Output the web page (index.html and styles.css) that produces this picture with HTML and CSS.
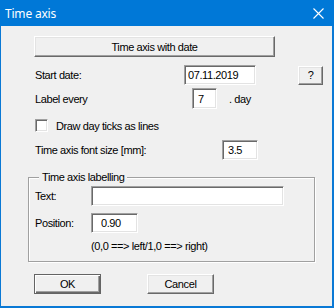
FILE: index.html
```html
<!DOCTYPE html>
<html lang="en">
<head>
    <meta charset="UTF-8">
    <title>Time axis</title>
    <link rel="stylesheet" href="styles.css">
</head>
<body>
    <div class="window">
        <div class="titlebar">
            <span class="title">Time axis</span>
            <svg class="close" width="11" height="11" viewBox="0 0 11 11">
                <path d="M0.5 0.5 L10.5 10.5 M10.5 0.5 L0.5 10.5" stroke="#fff" stroke-width="1.1" fill="none"/>
            </svg>
        </div>

        <div class="client">
            <button class="btn btn-wide">Time axis with date</button>

            <div class="row row-start">
                <span class="label label-start">Start date:</span>
                <input class="field field-date" value="07.11.2019">
                <button class="btn btn-help">?</button>
            </div>

            <div class="row row-every">
                <span class="label label-every">Label every</span>
                <input class="field field-every" value="7">
                <span class="unit">. day</span>
            </div>

            <div class="row row-check">
                <span class="checkbox"></span>
                <span class="label">Draw day ticks as lines</span>
            </div>

            <div class="row row-size">
                <span class="label label-size">Time axis font size [mm]:</span>
                <input class="field field-size" value="3.5">
            </div>

            <div class="group">
                <div class="legend">Time axis labelling</div>
                <div class="row row-text">
                    <span class="label label-group">Text:</span>
                    <input class="field field-text" value="">
                </div>
                <div class="row row-pos">
                    <span class="label label-group">Position:</span>
                    <input class="field field-pos" value="0.90">
                </div>
                <div class="hint">(0,0 ==&gt; left/1,0 ==&gt; right)</div>
            </div>

            <div class="row row-buttons">
                <button class="btn btn-dialog btn-default">OK</button>
                <button class="btn btn-dialog">Cancel</button>
            </div>
        </div>
    </div>
</body>
</html>
```

FILE: styles.css
```css
body {
    margin: 0;
    font-family: "Liberation Sans", Arial, sans-serif;
    font-size: 11px;
    letter-spacing: -0.4px;
    color: #000;
}

.window {
    width: 334px;
    height: 308px;
    box-sizing: border-box;
    background-color: #0a79d5;
    display: flex;
    flex-direction: column;
}

.titlebar {
    height: 26px;
    flex-shrink: 0;
    display: flex;
    align-items: center;
    padding: 0 10px 0 5px;
    background-color: #0078d7;
    color: #fff;
    font-family: "Noto Sans", "Open Sans", sans-serif;
    font-size: 12px;
    letter-spacing: -0.2px;
}

.close {
    margin-left: auto;
}

.client {
    flex: 1;
    margin: 0 2px 2px 1px;
    background-color: #f0f0f0;
    padding-top: 10px;
}

/* classic raised button */
.btn {
    display: block;
    box-sizing: border-box;
    padding: 0;
    font-family: "Liberation Sans", Arial, sans-serif;
    font-size: 11px;
    letter-spacing: -0.4px;
    color: #000;
    background-color: #f0f0f0;
    border: 1px solid;
    border-color: #fff #696969 #696969 #fff;
    box-shadow: inset -1px -1px 0 #a0a0a0, inset 1px 1px 0 #e3e3e3;
    border-radius: 0;
}

.btn-wide {
    width: 241px;
    height: 21px;
    margin-left: 33px;
}

.btn-help {
    width: 25px;
    height: 19px;
    margin-left: 42px;
}

.btn-dialog {
    width: 67px;
    height: 20px;
}

.btn-default {
    border-color: #646464;
    box-shadow: inset 1px 1px 0 #fff, inset -1px -1px 0 #696969, inset -2px -2px 0 #a0a0a0;
}

.btn-dialog + .btn-dialog {
    margin-left: 46px;
}

/* classic sunken field */
.field {
    box-sizing: border-box;
    margin: 0;
    height: 20px;
    padding: 0 0 0 3px;
    font-family: "Liberation Sans", Arial, sans-serif;
    font-size: 11px;
    letter-spacing: -0.4px;
    color: #000;
    background-color: #fff;
    border: 1px solid;
    border-color: #a0a0a0 #fff #fff #a0a0a0;
    box-shadow: inset 1px 1px 0 #696969, inset -1px -1px 0 #e3e3e3;
    outline: none;
}

.row {
    display: flex;
    align-items: center;
    padding-left: 34px;
}

.label {
    flex-shrink: 0;
}

.row-start {
    margin-top: 8px;
}

.label-start {
    width: 149px;
}

.field-date {
    width: 72px;
}

.row-every {
    margin-top: 3px;
}

.label-every {
    width: 157px;
}

.field-every {
    width: 25px;
    height: 21px;
    padding-left: 5px;
}

.unit {
    margin-left: 12px;
}

.row-check {
    margin-top: 10px;
}

.checkbox {
    width: 13px;
    height: 13px;
    box-sizing: border-box;
    margin-right: 8px;
    background-color: #fff;
    border: 1px solid;
    border-color: #a0a0a0 #fff #fff #a0a0a0;
    box-shadow: inset 1px 1px 0 #696969, inset -1px -1px 0 #e3e3e3;
}

.row-size {
    margin-top: 8px;
}

.label-size {
    width: 187px;
}

.field-size {
    width: 36px;
    padding-left: 5px;
}

/* etched group box */
.group {
    box-sizing: border-box;
    width: 287px;
    height: 85px;
    margin: 17px 0 0 27px;
    border: 1px solid #a0a0a0;
    box-shadow: 1px 1px 0 #fff, inset 1px 1px 0 #fff;
}

.legend {
    width: fit-content;
    height: 13px;
    line-height: 13px;
    margin: -7px 0 0 10px;
    padding: 0 3px;
    background-color: #f0f0f0;
}

.group .row {
    padding-left: 6px;
}

.row-text {
    margin-top: 2px;
}

.label-group {
    width: 56px;
}

.field-text {
    width: 193px;
}

.row-pos {
    margin-top: 7px;
}

.field-pos {
    width: 47px;
    padding-left: 9px;
}

.hint {
    margin: 7px 0 0 62px;
    line-height: 13px;
}

.row-buttons {
    margin-top: 12px;
    padding-left: 33px;
}
```
